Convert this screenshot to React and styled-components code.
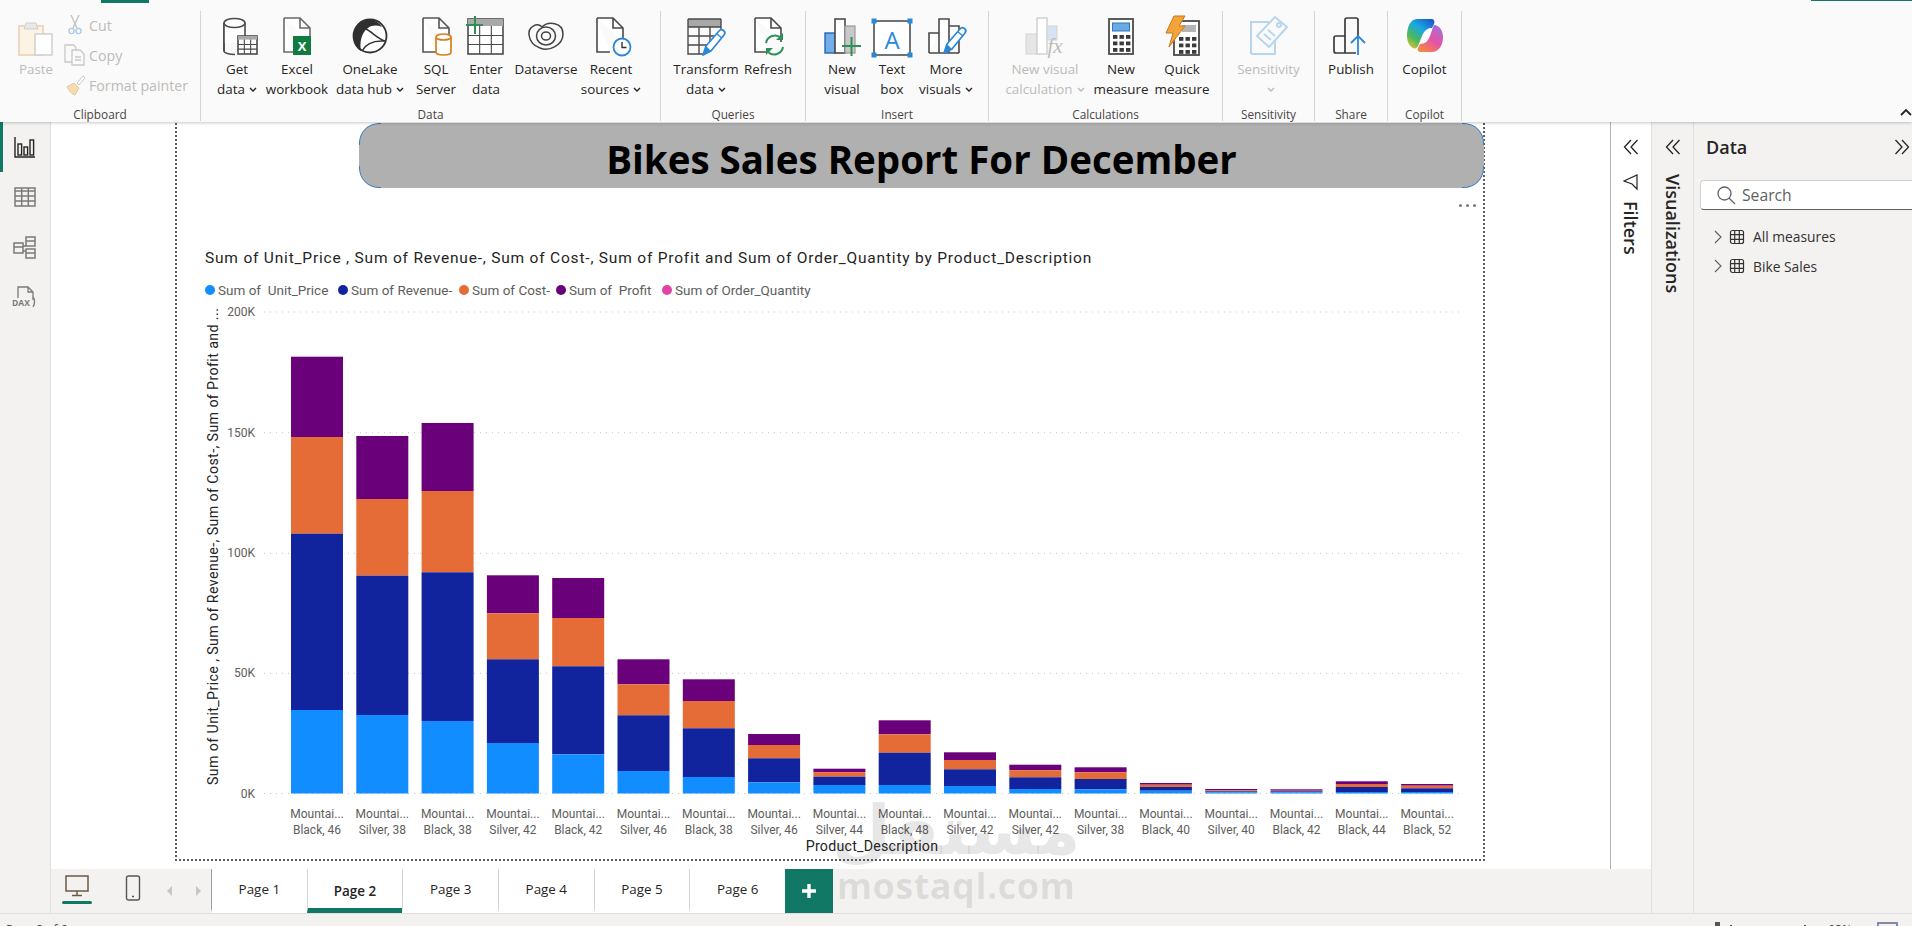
import React from 'react';
import styled, { createGlobalStyle } from 'styled-components';

const GlobalStyle = createGlobalStyle`
  html, body { margin: 0; padding: 0; height: 100%; overflow: hidden; background: #fff; }
  body { font-family: "Open Sans", "Noto Sans", sans-serif; color: #252423; }
  * { box-sizing: border-box; }
`;

const Shell = styled.div`
  position: relative;
  width: 1912px;
  height: 926px;
  display: flex;
  flex-direction: column;
  overflow: hidden;
`;

/* ---------- ribbon ---------- */

const Ribbon = styled.header`
  position: relative;
  z-index: 2;
  height: 122px;
  flex: none;
  display: flex;
  align-items: flex-start;
  padding-top: 11px;
  background: #fafafa;
  box-shadow: 0 1px 3px rgba(0, 0, 0, 0.22);
`;

const TabAccent = styled.i`
  position: absolute;
  top: 0;
  left: ${p => p.$left}px;
  width: ${p => p.$width}px;
  height: ${p => p.$height}px;
  background: #117865;
`;

const CollapseCaret = styled.svg`
  position: absolute;
  right: 0;
  top: 107px;
  width: 12px;
  height: 10px;
`;

const Group = styled.section`
  width: ${p => p.$w}px;
  height: 110px;
  flex: none;
  display: flex;
  flex-direction: column;
  border-right: 1px solid #d6d4d2;
`;

const GroupBody = styled.div`
  flex: 1;
  display: flex;
  justify-content: ${p => (p.$center ? 'center' : 'flex-start')};
  padding-top: 5px;
  padding-left: ${p => p.$pad || 0}px;
`;

const GroupLabel = styled.div`
  height: 14px;
  line-height: 14px;
  font-size: 11.8px;
  color: #484644;
  text-align: center;
`;

const RibbonButton = styled.div`
  width: ${p => p.$w}px;
  flex: none;
  display: flex;
  flex-direction: column;
  align-items: center;
  color: ${p => (p.$off ? '#bdbbb9' : '#252423')};
  font-size: 13.4px;
  line-height: 20px;
  white-space: nowrap;
`;

const IconSlot = styled.div`
  width: 40px;
  height: 40px;
  margin-bottom: 3px;
  svg { display: block; width: 40px; height: 40px; overflow: visible; }
`;

const Caret = styled.svg`
  width: 8px;
  height: 6px;
  margin-left: 4px;
  vertical-align: 1px;
`;

const ClipboardBody = styled.div`
  flex: 1;
  display: flex;
  padding-left: 15px;
`;

const PasteButton = styled(RibbonButton)`
  width: 42px;
  padding-top: 9px;
  svg { display: block; width: 36px; height: 36px; }
`;

const PasteLabel = styled.span`
  margin-top: 3px;
`;

const ClipList = styled.div`
  display: flex;
  flex-direction: column;
  margin-left: 7px;
  padding-top: 4px;
  gap: 10px;
`;

const ClipRow = styled.div`
  height: 20px;
  display: flex;
  align-items: center;
  gap: 3px;
  font-size: 14.2px;
  color: #bdbbb9;
  white-space: nowrap;
  svg { width: 22px; height: 22px; flex: none; }
`;

/* ---------- body ---------- */

const Workspace = styled.div`
  flex: 1;
  min-height: 0;
  display: flex;
`;

const Rail = styled.nav`
  width: 51px;
  flex: none;
  background: #f3f2f1;
  border-right: 1px solid #e1dfdd;
  display: flex;
  flex-direction: column;
`;

const RailItem = styled.div`
  height: 50px;
  display: flex;
  align-items: center;
  justify-content: center;
  border-left: 3px solid ${p => (p.$active ? '#117865' : 'transparent')};
  padding-right: 3px;
  svg { width: 24px; height: 24px; overflow: visible; }
`;

const Center = styled.main`
  flex: 1;
  min-width: 0;
  display: flex;
  flex-direction: column;
`;

const CanvasRow = styled.div`
  flex: 1;
  min-height: 0;
  display: flex;
`;

const Canvas = styled.div`
  flex: 1;
  min-width: 0;
  background: #fff;
  padding-left: 124px;
`;

const ReportPage = styled.div`
  position: relative;
  width: 1310px;
  height: 738px;
  border: 2px dotted #5c5c5c;
  border-top: none;
`;

const Banner = styled.div`
  position: relative;
  margin: 1px 0 0 182px;
  width: 1125px;
  height: 65px;
  border-radius: 20px;
  background: #b0b0b0;
  display: flex;
  align-items: center;
  justify-content: center;
  padding-top: 7px;
  font-size: 38.5px;
  font-weight: 700;
  color: #000;
  white-space: nowrap;
  &::before {
    content: "";
    position: absolute;
    inset: 0;
    border: 1.5px solid #2f7ed8;
    border-radius: 20px;
    -webkit-mask:
      radial-gradient(circle 22px at 0 0, #000 99%, transparent),
      radial-gradient(circle 22px at 100% 0, #000 99%, transparent),
      radial-gradient(circle 22px at 0 100%, #000 99%, transparent),
      radial-gradient(circle 22px at 100% 100%, #000 99%, transparent);
    mask:
      radial-gradient(circle 22px at 0 0, #000 99%, transparent),
      radial-gradient(circle 22px at 100% 0, #000 99%, transparent),
      radial-gradient(circle 22px at 0 100%, #000 99%, transparent),
      radial-gradient(circle 22px at 100% 100%, #000 99%, transparent);
  }
`;

const MoreDots = styled.div`
  position: absolute;
  top: 81px;
  right: 7px;
  display: flex;
  gap: 4px;
  i { width: 3px; height: 3px; border-radius: 50%; background: #7a7a7a; }
`;

const ChartTitle = styled.h2`
  margin: 60px 0 0 28px;
  height: 20px;
  font: 400 15.5px/20px Roboto, sans-serif;
  letter-spacing: 0.8px;
  color: #252423;
  white-space: nowrap;
`;

const Legend = styled.div`
  display: flex;
  margin: 11px 0 0 28px;
  height: 21px;
`;

const LegendItem = styled.div`
  width: ${p => p.$w}px;
  flex: none;
  display: flex;
  align-items: center;
  gap: 3px;
  font: 400 13.5px/20px Roboto, sans-serif;
  color: #605e5c;
  white-space: pre;
`;

const LegendDot = styled.i`
  width: 10px;
  height: 10px;
  border-radius: 50%;
  background: ${p => p.$color};
`;

const PlotSvg = styled.svg`
  display: block;
  width: 1306px;
  height: 558px;
`;

const Tick = styled.text`
  font: 400 12px Roboto, sans-serif;
  fill: #605e5c;
`;

const AxisTitle = styled.text`
  font: 400 14.2px Roboto, sans-serif;
  fill: #252423;
  letter-spacing: ${p => p.$spacing}px;
`;

const FiltersPane = styled.aside`
  width: 41px;
  flex: none;
  background: #fff;
  border-left: 1px solid #b3b0ad;
  display: flex;
  flex-direction: column;
  align-items: center;
  padding-top: 16px;
`;

const PaneChevron = styled.svg`
  width: 16px;
  height: 18px;
  flex: none;
`;

const FilterIcon = styled.svg`
  width: 16px;
  height: 18px;
  margin-top: 17px;
`;

const VerticalLabel = styled.div`
  writing-mode: vertical-rl;
  font-size: 18px;
  font-weight: 600;
  line-height: 20px;
  color: #252423;
  margin-top: ${p => p.$top}px;
`;

const VizPane = styled.aside`
  width: 43px;
  flex: none;
  background: #f3f2f1;
  border-left: 1px solid #e1dfdd;
  border-right: 1px solid #e1dfdd;
  display: flex;
  flex-direction: column;
  align-items: center;
  padding-top: 16px;
`;

const DataPane = styled.aside`
  width: 218px;
  flex: none;
  background: #f3f2f1;
  overflow: hidden;
`;

const DataHeader = styled.div`
  height: 50px;
  margin-bottom: 8px;
  display: flex;
  align-items: center;
  justify-content: space-between;
  padding: 0 2px 0 12px;
  font-size: 18px;
  font-weight: 600;
  color: #252423;
`;

const SearchBox = styled.div`
  width: 240px;
  height: 30px;
  margin-left: 6px;
  background: #fff;
  border: 1px solid #d1d1d1;
  border-bottom: 1px solid #616161;
  border-radius: 4px;
  display: flex;
  align-items: center;
  gap: 6px;
  padding-left: 15px;
  font-size: 15.7px;
  color: #616161;
  svg { width: 20px; height: 20px; }
`;

const TreeList = styled.div`
  padding: 12px 0 0 19px;
`;

const TreeRow = styled.div`
  height: 29.5px;
  display: flex;
  align-items: center;
  font-size: 13.8px;
  color: #323130;
  svg { flex: none; }
`;

const TreeIcon = styled.svg`
  width: 16px;
  height: 16px;
  margin: 0 8px 0 6px;
`;

/* ---------- tabs ---------- */

const TabStrip = styled.div`
  height: 44px;
  flex: none;
  background: #f3f2f1;
  display: flex;
`;

const ViewSwitch = styled.div`
  width: 160px;
  flex: none;
  display: flex;
  align-items: flex-start;
  padding-left: 11px;
`;

const DeviceButton = styled.div`
  width: 30px;
  height: 44px;
  flex: none;
  margin-left: ${p => p.$gap || 0}px;
  display: flex;
  flex-direction: column;
  align-items: center;
  padding-top: 6px;
  svg { display: block; }
`;

const ActiveMark = styled.i`
  width: 30px;
  height: 3px;
  margin-top: 4px;
  border-radius: 2px;
  background: #117865;
`;

const PageArrows = styled.div`
  display: flex;
  gap: 20px;
  padding: 16px 0 0 18px;
  svg { width: 8px; height: 12px; }
`;

const PageTab = styled.div`
  width: 95.67px;
  flex: none;
  display: flex;
  align-items: center;
  justify-content: center;
  background: #fff;
  border-left: 1px solid ${p => (p.$first ? '#a19f9d' : '#d6d4d2')};
  border-bottom: 5px solid ${p => (p.$active ? '#117865' : '#fff')};
  padding-top: ${p => (p.$active ? 5 : 0)}px;
  font-size: 13.4px;
  font-weight: ${p => (p.$active ? 600 : 400)};
  color: #252423;
`;

const AddPage = styled.div`
  width: 48px;
  flex: none;
  background: #117865;
  display: flex;
  align-items: center;
  justify-content: center;
  svg { width: 16px; height: 16px; }
`;

const StatusBar = styled.footer`
  height: 13px;
  flex: none;
  position: relative;
  background: #f3f2f1;
  border-top: 1px solid #e1dfdd;
  overflow: hidden;
  font-size: 12px;
  line-height: 16px;
  color: #484644;
  display: flex;
  padding: 8px 14px 0 6px;
`;

const StatusSpacer = styled.div`
  flex: 1;
`;

const ZoomThumb = styled.i`
  width: 5px;
  height: 12px;
  background: #555;
`;

const ZoomLine = styled.i`
  width: 2px;
  height: 12px;
  margin: 3px 0 0 ${p => p.$gap}px;
  background: #555;
`;

const ZoomValue = styled.span`
  margin-left: 22px;
`;

const FitButton = styled.i`
  width: 21px;
  height: 12px;
  margin-left: 25px;
  border: 2px solid #7d8ea3;
`;

const Watermark = styled.div`
  position: absolute;
  z-index: 5;
  left: 836px;
  top: 794px;
  width: 240px;
  display: flex;
  flex-direction: column;
  align-items: center;
  color: rgba(60, 60, 60, 0.12);
  pointer-events: none;
  white-space: nowrap;
`;

const WatermarkArabic = styled.div`
  font: 700 68px/74px "DejaVu Sans", "Noto Sans", sans-serif;
  direction: rtl;
`;

const WatermarkLatin = styled.div`
  font: 700 36px/36px "Open Sans", sans-serif;
  letter-spacing: 0.5px;
`;

/* ---------- ribbon icons ---------- */

const DK = '#4a4a4a';

const Doc = ({ c = DK }) => (
  <path d="M7 2h16l10 10v14M7 2v34h13M23 2v10h10" fill="#fff" stroke={c} strokeWidth="1.6" />
);

const GridTable = ({ x, y, w, h, c = DK, head = '#a8a8a8' }) => (
  <g>
    <rect x={x} y={y} width={w} height={h} fill="#fff" stroke={c} strokeWidth="1.6" />
    <rect x={x} y={y} width={w} height={h * 0.2} fill={head} />
    <path
      d={`M${x} ${y + h * 0.47}H${x + w}M${x} ${y + h * 0.73}H${x + w}M${x + w / 3} ${y + h * 0.2}V${y + h}M${x + (w * 2) / 3} ${y + h * 0.2}V${y + h}`}
      stroke={c}
      strokeWidth="1.1"
      fill="none"
    />
  </g>
);

const Pencil = ({ dx = 0, dy = 0 }) => (
  <g transform={`translate(${dx} ${dy})`}>
    <path d="M13 33l3-9L29 9a3 3 0 0 1 5 4L21 29z" fill="#fff" stroke="#2b88d8" strokeWidth="1.7" strokeLinejoin="round" />
    <path d="M13 33l3-9 5 5z" fill="#2b88d8" />
    <path d="M27 12l5 4" stroke="#2b88d8" strokeWidth="1.4" />
  </g>
);

const CalcKeys = ({ x, y }) => {
  const keys = [];
  for (let r = 0; r < 3; r++) {
    for (let k = 0; k < 3; k++) {
      keys.push(<rect key={`${r}${k}`} x={x + k * 6.5} y={y + r * 6.5} width="4.4" height="3.8" fill="#3a3a3a" />);
    }
  }
  return <g>{keys}</g>;
};

const icons = {
  getData: (
    <svg viewBox="0 0 40 40">
      <path d="M7 7v28c0 2 5 3.5 11 3.5" fill="none" stroke={DK} strokeWidth="1.6" />
      <path d="M7 7v20h21V7z" fill="#fff" />
      <ellipse cx="17.5" cy="7" rx="10.5" ry="4.5" fill="#fff" stroke={DK} strokeWidth="1.6" />
      <path d="M7 7v28M28 7v14" fill="none" stroke={DK} strokeWidth="1.6" />
      <GridTable x={21} y={20} w={19} h={18} />
    </svg>
  ),
  excel: (
    <svg viewBox="0 0 40 40">
      <Doc c="#6a6a6a" />
      <rect x="16" y="20" width="18" height="19" fill="#107c41" />
      <text x="25" y="35" textAnchor="middle" fontFamily="Open Sans, sans-serif" fontWeight="700" fontSize="13" fill="#fff">X</text>
    </svg>
  ),
  oneLake: (
    <svg viewBox="0 0 40 40">
      <circle cx="20" cy="20" r="16.5" fill="#fff" stroke="#333" strokeWidth="1.8" />
      <path d="M15 4C6 6 1.5 17 4.5 27c1.5 4 3.5 6.5 6.5 8-1.500-8 0-18 7-23 4-3 9-3 14-1-3-5-11-9-17-7z" fill="#2f2f2f" />
      <path d="M16 13c6 3 12 10 19 12M12 35c3-6 9-11 23-10" fill="none" stroke="#333" strokeWidth="1.5" />
    </svg>
  ),
  sql: (
    <svg viewBox="0 0 40 40">
      <Doc c="#555" />
      <path d="M20 21v15c0 2 3.5 3 7.5 3s7.5-1 7.5-3V21" fill="#fff" stroke="#d67f1e" strokeWidth="1.7" />
      <ellipse cx="27.5" cy="21" rx="7.5" ry="3" fill="#fff" stroke="#d67f1e" strokeWidth="1.7" />
    </svg>
  ),
  enter: (
    <svg viewBox="0 0 40 40">
      <GridTable x={2} y={3} w={35} h={35} />
      <path d="M0 9h17M9 0v18" stroke="#2f8f5b" strokeWidth="2" />
    </svg>
  ),
  dataverse: (
    <svg viewBox="0 0 40 40" fill="none" stroke="#444" strokeWidth="1.5">
      <path d="M3 19C2 11 11 6 16 11c6-6 21-5 21 7 0 11-14 18-23 14C8 30 4 26 3 19z" />
      <ellipse cx="20" cy="20" rx="9.5" ry="9" />
      <ellipse cx="20" cy="20" rx="4.5" ry="4" />
    </svg>
  ),
  recent: (
    <svg viewBox="0 0 40 40">
      <g transform="translate(-1 0)"><Doc /></g>
      <circle cx="31" cy="31" r="8.5" fill="#fff" stroke="#2b88d8" strokeWidth="1.8" />
      <path d="M31 26v5.5h4.5" fill="none" stroke="#333" strokeWidth="1.4" />
    </svg>
  ),
  transform: (
    <svg viewBox="0 0 40 40">
      <path d="M2 3h33v8H2z" fill="#a8a8a8" />
      <path d="M2 3h33M2 3v35h16M35 3v14M2 11h33M2 20h30M2 29h20M13 11v27M24 11v18" fill="none" stroke={DK} strokeWidth="1.4" />
      <Pencil dx={4} dy={6} />
    </svg>
  ),
  refresh: (
    <svg viewBox="0 0 40 40">
      <Doc />
      <path d="M18 27a9 9 0 0 1 15-5" fill="none" stroke="#2f8f5b" strokeWidth="2" />
      <path d="M35 17v7h-7z" fill="#2f8f5b" />
      <path d="M35 31a9 9 0 0 1-15 5" fill="none" stroke="#2f8f5b" strokeWidth="2" />
      <path d="M18 39v-7h7z" fill="#2f8f5b" />
    </svg>
  ),
  newVisual: (
    <svg viewBox="0 0 40 40">
      <rect x="3" y="17" width="10" height="20" fill="#73aee8" stroke="#2566ad" strokeWidth="1.4" />
      <rect x="13" y="3" width="10" height="34" fill="#fff" stroke={DK} strokeWidth="1.6" />
      <rect x="23" y="10" width="10" height="27" fill="#c8c8c8" stroke="#9a9a9a" strokeWidth="1.2" />
      <path d="M20 30h19M29.5 21v19" stroke="#2f8f5b" strokeWidth="2" />
    </svg>
  ),
  textBox: (
    <svg viewBox="0 0 40 40">
      <rect x="2" y="5" width="36" height="34" fill="#fff" stroke="#444" strokeWidth="1.5" />
      <text x="20" y="33" textAnchor="middle" fontFamily="Open Sans, sans-serif" fontSize="24" fill="#2b88d8">A</text>
      {[[2, 5], [38, 5], [2, 39], [38, 39]].map(([x, y]) => (
        <rect key={`${x}${y}`} x={x - 2.5} y={y - 2.5} width="5" height="5" fill="#2b88d8" />
      ))}
    </svg>
  ),
  moreVisuals: (
    <svg viewBox="0 0 40 40">
      <path d="M3 37V17h10M13 37V3h10v34M23 10h10v27M3 37h30" fill="#fff" stroke={DK} strokeWidth="1.6" />
      <Pencil dx={5} dy={4} />
    </svg>
  ),
  newCalc: (
    <svg viewBox="0 0 40 40">
      <rect x="1" y="18" width="11" height="20" fill="#e6e6e6" stroke="#d4d4d4" />
      <rect x="12" y="2" width="10" height="36" fill="#fff" stroke="#cfcfcf" strokeWidth="1.4" />
      <rect x="22" y="10" width="10" height="14" fill="#d5e3f3" stroke="#d4d4d4" />
      <text x="30" y="37" textAnchor="middle" fontFamily="Liberation Serif, serif" fontStyle="italic" fontSize="21" fill="#bdbbb9">fx</text>
    </svg>
  ),
  measure: (
    <svg viewBox="0 0 40 40">
      <rect x="8" y="3" width="24" height="35" fill="#fff" stroke={DK} strokeWidth="1.8" />
      <rect x="11.5" y="7" width="17" height="8" fill="#6aa9e2" stroke="#2b78c5" />
      <CalcKeys x={12} y={19} />
    </svg>
  ),
  quickMeasure: (
    <svg viewBox="0 0 40 40">
      <rect x="12" y="5" width="25" height="34" fill="#fff" stroke={DK} strokeWidth="1.8" />
      <rect x="20" y="9" width="14" height="7" fill="#b5b5b5" />
      <CalcKeys x={17} y={21} />
      <path d="M12 0h11l-6 10h6L7 31l4-14H4z" fill="#f2a33a" stroke="#c9771a" strokeWidth="1" />
    </svg>
  ),
  sensitivity: (
    <svg viewBox="0 0 40 40" fill="none" stroke="#b7d6ee" strokeWidth="2">
      <path d="M2 38V6h18M2 38h24V24" />
      <path d="M26 1l12 10-18 20-12-11z" fill="#fafafa" />
      <path d="M15 18l7 6M19 14l7 6" />
      <circle cx="30" cy="9" r="2" />
    </svg>
  ),
  publish: (
    <svg viewBox="0 0 40 40">
      <path d="M14 37H5a2 2 0 0 1-2-2V22a2 2 0 0 1 2-2h9" fill="none" stroke="#3b3b3b" strokeWidth="1.7" />
      <path d="M14 37V4a2 2 0 0 1 2-2h9a2 2 0 0 1 2 2v17M14 37h11" fill="none" stroke="#3b3b3b" strokeWidth="1.7" />
      <path d="M27 39V20M20 27l7-7 7 7" fill="none" stroke="#2b88d8" strokeWidth="1.8" />
    </svg>
  ),
  copilot: (
    <svg viewBox="0 0 40 40">
      <defs>
        <linearGradient id="cpA" x1="0.8" y1="0" x2="0.1" y2="1">
          <stop offset="0" stopColor="#1a5fd0" />
          <stop offset="0.35" stopColor="#18a8e0" />
          <stop offset="0.7" stopColor="#4cb85c" />
          <stop offset="1" stopColor="#e8c22e" />
        </linearGradient>
        <linearGradient id="cpB" x1="0.8" y1="0" x2="0.2" y2="1">
          <stop offset="0" stopColor="#a46fd8" />
          <stop offset="0.5" stopColor="#e353a8" />
          <stop offset="1" stopColor="#f58a3c" />
        </linearGradient>
      </defs>
      <path d="M12 3h14c3 0 4 2 3 5l-2 4c-5 0-8 3-10 8l-4 10c-1 2-3 3-5 2-4-2-6-7-6-12C2 12 5 3 12 3z" fill="url(#cpA)" />
      <path d="M29 9c5 0 9 5 9 12 0 8-4 15-11 15H16c-3 0-4-2-3-4l2-4c5 0 8-3 10-8l3-9z" fill="url(#cpB)" />
      <path d="M25 12c-4 3-6 7-8 15l4-1c3-3 4-8 6-13z" fill="#fff" />
    </svg>
  ),
};

const Chevron = () => (
  <Caret viewBox="0 0 8 6">
    <path d="M1 1l3 3 3-3" fill="none" stroke="currentColor" strokeWidth="1.4" />
  </Caret>
);

const ribbonGroups = [
  {
    label: 'Data', w: 460, pad: 6, items: [
      { w: 60, icon: 'getData', l1: 'Get', l2: 'data', more: true },
      { w: 60, icon: 'excel', l1: 'Excel', l2: 'workbook' },
      { w: 86, icon: 'oneLake', l1: 'OneLake', l2: 'data hub', more: true },
      { w: 46, icon: 'sql', l1: 'SQL', l2: 'Server' },
      { w: 54, icon: 'enter', l1: 'Enter', l2: 'data' },
      { w: 66, icon: 'dataverse', l1: 'Dataverse' },
      { w: 64, icon: 'recent', l1: 'Recent', l2: 'sources', more: true },
    ],
  },
  {
    label: 'Queries', w: 145, pad: 9, items: [
      { w: 72, icon: 'transform', l1: 'Transform', l2: 'data', more: true },
      { w: 52, icon: 'refresh', l1: 'Refresh' },
    ],
  },
  {
    label: 'Insert', w: 183, pad: 11, items: [
      { w: 50, icon: 'newVisual', l1: 'New', l2: 'visual' },
      { w: 50, icon: 'textBox', l1: 'Text', l2: 'box' },
      { w: 58, icon: 'moreVisuals', l1: 'More', l2: 'visuals', more: true },
    ],
  },
  {
    label: 'Calculations', w: 234, pad: 12, items: [
      { w: 88, icon: 'newCalc', l1: 'New visual', l2: 'calculation', more: true, off: true },
      { w: 64, icon: 'measure', l1: 'New', l2: 'measure' },
      { w: 58, icon: 'quickMeasure', l1: 'Quick', l2: 'measure' },
    ],
  },
  {
    label: 'Sensitivity', w: 92, center: true, items: [
      { w: 80, icon: 'sensitivity', l1: 'Sensitivity', l2: '', more: true, off: true },
    ],
  },
  { label: 'Share', w: 73, center: true, items: [{ w: 60, icon: 'publish', l1: 'Publish' }] },
  { label: 'Copilot', w: 74, center: true, items: [{ w: 60, icon: 'copilot', l1: 'Copilot' }] },
];

const RibbonBar = () => (
  <Ribbon>
    <TabAccent $left={101} $width={48} $height={3} />
    <TabAccent $left={1811} $width={101} $height={1} />
    <Group $w={201}>
      <ClipboardBody>
        <PasteButton $off>
          <svg viewBox="0 0 36 36">
            <path d="M1 6h24v29H1z" fill="#fdf3e4" stroke="#ecd9bf" strokeWidth="2" />
            <path d="M8 3h10l2 6H6z" fill="#e8e8e8" stroke="#cfcfcf" />
            <rect x="17" y="14" width="17" height="21" fill="#fff" stroke="#cfcfcf" strokeWidth="1.5" />
          </svg>
          <PasteLabel>Paste</PasteLabel>
        </PasteButton>
        <ClipList>
          <ClipRow>
            <svg viewBox="0 0 22 22" fill="none">
              <path d="M7 1l6 13M15 1L9 14" stroke="#c4c4c4" strokeWidth="1.4" />
              <circle cx="7.5" cy="17" r="2.6" stroke="#a9cbe8" strokeWidth="1.4" />
              <circle cx="14.5" cy="17" r="2.6" stroke="#a9cbe8" strokeWidth="1.4" />
            </svg>
            Cut
          </ClipRow>
          <ClipRow>
            <svg viewBox="0 0 22 22" fill="none" stroke="#c9c9c9" strokeWidth="1.3">
              <path d="M1 1h9l2 3v14H1z" />
              <path d="M8 6h8l4 4v11H8z" fill="#fafafa" />
              <path d="M11 13h6M11 16h6" />
            </svg>
            Copy
          </ClipRow>
          <ClipRow>
            <svg viewBox="0 0 22 22">
              <path d="M13 9l6-7 2 2-6 7z" fill="#fff" stroke="#c9c9c9" />
              <path d="M3 13l7-4 5 5-4 7c-3-1-6-4-8-8z" fill="#f6dcb4" stroke="#e6c696" />
            </svg>
            Format painter
          </ClipRow>
        </ClipList>
      </ClipboardBody>
      <GroupLabel>Clipboard</GroupLabel>
    </Group>
    {ribbonGroups.map(g => (
      <Group key={g.label} $w={g.w}>
        <GroupBody $pad={g.pad} $center={g.center}>
          {g.items.map(it => (
            <RibbonButton key={it.icon} $w={it.w} $off={it.off}>
              <IconSlot>{icons[it.icon]}</IconSlot>
              <span>{it.l1}</span>
              {(it.l2 !== undefined) && <span>{it.l2}{it.more && <Chevron />}</span>}
            </RibbonButton>
          ))}
        </GroupBody>
        <GroupLabel>{g.label}</GroupLabel>
      </Group>
    ))}
    <CollapseCaret viewBox="0 0 12 10">
      <path d="M1 8l5-5 5 5" fill="none" stroke="#252423" strokeWidth="1.8" />
    </CollapseCaret>
  </Ribbon>
);

/* ---------- chart ---------- */

const COLORS = { unit: '#118DFF', rev: '#12239E', cost: '#E66C37', profit: '#6B007B', qty: '#E044A7' };
const TOP = 300;
const LEFT = 177;
const BASE = 793.5;

// y of each stack boundary read off the reference: top of profit, cost, revenue, unit price
const bars = [
  { name: 'Black, 46', y: [356.7, 437, 533.7, 710] },
  { name: 'Silver, 38', y: [436, 499, 575.7, 715] },
  { name: 'Black, 38', y: [423, 491, 572.3, 721] },
  { name: 'Silver, 42', y: [575.3, 613.3, 659.3, 743] },
  { name: 'Black, 42', y: [578, 618, 666.3, 754.3] },
  { name: 'Silver, 46', y: [659.3, 684.3, 715.3, 771] },
  { name: 'Black, 38', y: [679.3, 701, 728.3, 777] },
  { name: 'Silver, 46', y: [734, 745, 758.3, 782.3] },
  { name: 'Silver, 44', y: [768.7, 772.3, 776.7, 785] },
  { name: 'Black, 48', y: [720.3, 734.3, 752.7, 785] },
  { name: 'Silver, 42', y: [752.3, 760, 769.3, 786] },
  { name: 'Silver, 42', y: [764.7, 770.3, 777.3, 789] },
  { name: 'Silver, 38', y: [767.3, 772.3, 779, 789.3] },
  { name: 'Black, 40', y: [783, 784.7, 787, 790.7] },
  { name: 'Silver, 40', y: [789, 790.3, 791.3, 792.3] },
  { name: 'Black, 42', y: [789.3, 790.7, 791.3, 792.3] },
  { name: 'Black, 44', y: [781.3, 784, 787, 792] },
  { name: 'Black, 52', y: [784, 785.7, 788.3, 792] },
];

const ticks = [
  { label: '200K', y: 312 },
  { label: '150K', y: 432.7 },
  { label: '100K', y: 553.3 },
  { label: '50K', y: 673.3 },
  { label: '0K', y: 793.5 },
];

const legend = [
  { label: 'Sum of  Unit_Price', color: COLORS.unit, w: 133 },
  { label: 'Sum of Revenue-', color: COLORS.rev, w: 121 },
  { label: 'Sum of Cost-', color: COLORS.cost, w: 97 },
  { label: 'Sum of  Profit', color: COLORS.profit, w: 106 },
  { label: 'Sum of Order_Quantity', color: COLORS.qty, w: 170 },
];

const Plot = () => (
  <PlotSvg viewBox="0 0 1306 558">
    {ticks.map(t => (
      <g key={t.label}>
        <line x1={264 - LEFT} x2={1462 - LEFT} y1={t.y - TOP} y2={t.y - TOP} stroke="#c8c6c4" strokeDasharray="1 5" />
        <Tick x={255 - LEFT} y={t.y - TOP + 4} textAnchor="end">{t.label}</Tick>
      </g>
    ))}
    <AxisTitle $spacing={0.4} transform={`translate(${218 - LEFT} ${785 - TOP}) rotate(-90)`}>
      Sum of Unit_Price , Sum of Revenue-, Sum of Cost-, Sum of Profit and ...
    </AxisTitle>
    {bars.map((b, i) => {
      const x = 291 + i * 65.3 - LEFT;
      const cx = x + 26;
      const parts = [
        [b.y[0], b.y[1], COLORS.profit],
        [b.y[1], b.y[2], COLORS.cost],
        [b.y[2], b.y[3], COLORS.rev],
        [b.y[3], BASE, COLORS.unit],
      ];
      return (
        <g key={i}>
          {parts.map(([a, z, c]) => (
            <rect key={c} x={x} y={a - TOP} width="52" height={z - a} fill={c} />
          ))}
          <Tick x={cx} y={818 - TOP} textAnchor="middle">Mountai...</Tick>
          <Tick x={cx} y={834 - TOP} textAnchor="middle">{b.name}</Tick>
        </g>
      );
    })}
    <AxisTitle $spacing={0.25} x={872 - LEFT} y={851 - TOP} textAnchor="middle">Product_Description</AxisTitle>
  </PlotSvg>
);

const Grid16 = () => (
  <TreeIcon viewBox="0 0 16 16" fill="none" stroke="#323130" strokeWidth="1.2">
    <rect x="1.5" y="1.5" width="13" height="13" rx="2" />
    <path d="M5.7 1.5v13M10.3 1.5v13M1.5 5.7h13M1.5 10.3h13" />
  </TreeIcon>
);

const TreeCaret = () => (
  <svg width="10" height="16" viewBox="0 0 10 16" fill="none" stroke="#605e5c" strokeWidth="1.1">
    <path d="M2 2l6 6-6 6" />
  </svg>
);

const Chevrons = ({ dir }) => (
  <PaneChevron viewBox="0 0 16 18" fill="none" stroke="#252423" strokeWidth="1.3">
    <path d={dir === 'left' ? 'M8 2L1.5 9 8 16M14.5 2L8 9l6.5 7' : 'M8 2l6.5 7L8 16M1.5 2L8 9l-6.5 7'} />
  </PaneChevron>
);

const railIcons = [
  <svg key="r" viewBox="0 0 24 24" fill="none" stroke="#252423" strokeWidth="1.4">
    <path d="M2 2v20h20" />
    <rect x="5" y="9" width="3.6" height="11" />
    <rect x="11" y="12" width="3.6" height="8" />
    <rect x="17" y="5" width="3.6" height="15" />
  </svg>,
  <svg key="t" viewBox="0 0 24 24" fill="none" stroke="#7a7a7a" strokeWidth="1.5">
    <rect x="2" y="3" width="20" height="18" />
    <path d="M2 6h20M2 11h20M2 16h20M8.7 3v18M15.3 3v18" />
  </svg>,
  <svg key="m" viewBox="0 0 24 24" fill="none" stroke="#7a7a7a" strokeWidth="1.5">
    <rect x="1" y="8" width="9" height="10" />
    <path d="M1 12h9" />
    <rect x="13" y="2" width="9" height="9" />
    <path d="M13 6h9" />
    <rect x="13" y="14" width="9" height="9" />
    <path d="M13 18h9M10 11h3M10 16h3" />
  </svg>,
  <svg key="d" viewBox="0 0 24 24" fill="none" stroke="#7a7a7a" strokeWidth="1.3">
    <path d="M5 13V2h10l5 5v8M15 2v5h5" />
    <path d="M20 12c2 2 2 7 0 10" />
    <text x="-1" y="21" fontFamily="Open Sans, sans-serif" fontWeight="700" fontSize="8.5" fill="#7a7a7a" stroke="none">DAX</text>
  </svg>,
];

export default function App() {
  return (
    <Shell>
      <GlobalStyle />
      <RibbonBar />
      <Workspace>
        <Rail>
          {railIcons.map((ic, i) => (
            <RailItem key={i} $active={i === 0}>{ic}</RailItem>
          ))}
        </Rail>
        <Center>
          <CanvasRow>
            <Canvas>
              <ReportPage>
                <Banner>Bikes Sales Report For December</Banner>
                <MoreDots><i /><i /><i /></MoreDots>
                <ChartTitle>Sum of Unit_Price , Sum of Revenue-, Sum of Cost-, Sum of Profit and Sum of Order_Quantity by Product_Description</ChartTitle>
                <Legend>
                  {legend.map(l => (
                    <LegendItem key={l.label} $w={l.w}>
                      <LegendDot $color={l.color} />
                      {l.label}
                    </LegendItem>
                  ))}
                </Legend>
                <Plot />
              </ReportPage>
            </Canvas>
            <FiltersPane>
              <Chevrons dir="left" />
              <FilterIcon viewBox="0 0 16 18" fill="none" stroke="#252423" strokeWidth="1.2">
                <path d="M1 8l13-6v14L9 11z" />
              </FilterIcon>
              <VerticalLabel $top={10}>Filters</VerticalLabel>
            </FiltersPane>
          </CanvasRow>
          <TabStrip>
            <ViewSwitch>
              <DeviceButton>
                <svg width="24" height="22" viewBox="0 0 24 22" fill="none" stroke="#6b5a45" strokeWidth="1.5">
                  <rect x="1" y="1" width="22" height="15" />
                  <path d="M12 16v4M7 20.5h10" />
                </svg>
                <ActiveMark />
              </DeviceButton>
              <DeviceButton $gap={26}>
                <svg width="16" height="26" viewBox="0 0 16 26" fill="none" stroke="#555" strokeWidth="1.4">
                  <rect x="1.5" y="1" width="13" height="24" rx="2" />
                  <path d="M7 21.5h2" />
                </svg>
              </DeviceButton>
              <PageArrows>
                <svg viewBox="0 0 8 12"><path d="M6 1L1 6l5 5z" fill="#c8c6c4" /></svg>
                <svg viewBox="0 0 8 12"><path d="M2 1l5 5-5 5z" fill="#c8c6c4" /></svg>
              </PageArrows>
            </ViewSwitch>
            {[1, 2, 3, 4, 5, 6].map(n => (
              <PageTab key={n} $first={n === 1} $active={n === 2}>Page {n}</PageTab>
            ))}
            <AddPage>
              <svg viewBox="0 0 16 16"><path d="M8 1v14M1 8h14" stroke="#fff" strokeWidth="3.4" /></svg>
            </AddPage>
          </TabStrip>
        </Center>
        <VizPane>
          <Chevrons dir="left" />
          <VerticalLabel $top={18}>Visualizations</VerticalLabel>
        </VizPane>
        <DataPane>
          <DataHeader>
            Data
            <Chevrons dir="right" />
          </DataHeader>
          <SearchBox>
            <svg viewBox="0 0 20 20" fill="none" stroke="#616161" strokeWidth="1.3">
              <circle cx="8.5" cy="8.5" r="6.5" />
              <path d="M13 13l6 6" />
            </svg>
            Search
          </SearchBox>
          <TreeList>
            <TreeRow><TreeCaret /><Grid16 />All measures</TreeRow>
            <TreeRow><TreeCaret /><Grid16 />Bike Sales</TreeRow>
          </TreeList>
        </DataPane>
      </Workspace>
      <StatusBar>
        Page 2 of 6
        <StatusSpacer />
        <ZoomThumb />
        <ZoomLine $gap={10} />
        <ZoomLine $gap={72} />
        <ZoomValue>93%</ZoomValue>
        <FitButton />
      </StatusBar>
      <Watermark>
        <WatermarkArabic>مستقل</WatermarkArabic>
        <WatermarkLatin>mostaql.com</WatermarkLatin>
      </Watermark>
    </Shell>
  );
}
